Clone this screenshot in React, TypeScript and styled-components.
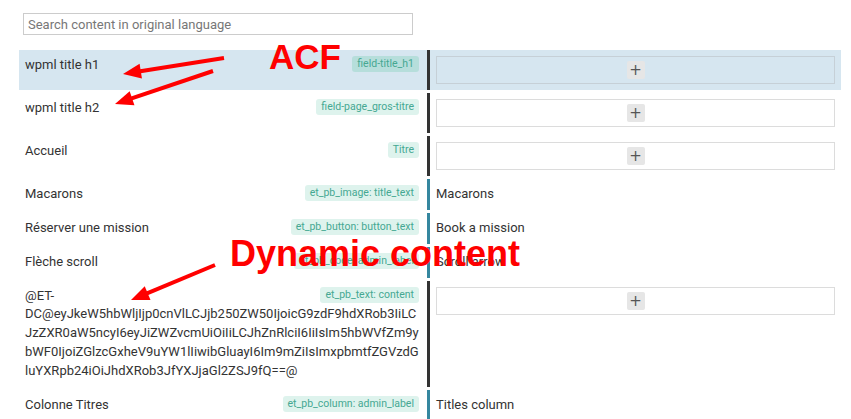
import React from 'react';
import styled, { createGlobalStyle } from 'styled-components';

type Cell = { kind: 'box' } | { kind: 'text'; value: string };

type Item = {
    original: string;
    tag: string;
    translation: Cell;
    active?: boolean;
};

const items: Item[] = [
    { original: 'wpml title h1', tag: 'field-title_h1', translation: { kind: 'box' }, active: true },
    { original: 'wpml title h2', tag: 'field-page_gros-titre', translation: { kind: 'box' } },
    { original: 'Accueil', tag: 'Titre', translation: { kind: 'box' } },
    { original: 'Macarons', tag: 'et_pb_image: title_text', translation: { kind: 'text', value: 'Macarons' } },
    { original: 'Réserver une mission', tag: 'et_pb_button: button_text', translation: { kind: 'text', value: 'Book a mission' } },
    { original: 'Flèche scroll', tag: 'et_pb_code: admin_label', translation: { kind: 'text', value: 'Scroll arrow' } },
    {
        original: '@ET-DC@eyJkeW5hbWljIjp0cnVlLCJjb250ZW50IjoicG9zdF9hdXRob3IiLCJzZXR0aW5ncyI6eyJiZWZvcmUiOiIiLCJhZnRlciI6IiIsIm5hbWVfZm9ybWF0IjoiZGlzcGxheV9uYW1lIiwibGluayI6Im9mZiIsImxpbmtfZGVzdGluYXRpb24iOiJhdXRob3JfYXJjaGl2ZSJ9fQ==@',
        tag: 'et_pb_text: content',
        translation: { kind: 'box' },
    },
    { original: 'Colonne Titres', tag: 'et_pb_column: admin_label', translation: { kind: 'text', value: 'Titles column' } },
];

const GlobalStyle = createGlobalStyle`
    body {
        margin: 0;
        background: #fff;
        font-family: Roboto, "Liberation Sans", sans-serif;
        color: #333;
    }
`

const App: React.FunctionComponent = () => {
    return (
        <Page>
            <GlobalStyle />
            <SearchWrap>
                <Search placeholder='Search content in original language' />
            </SearchWrap>
            <Table>
                {items.map((item, idx) => (
                    <Row key={idx} $active={item.active}>
                        <Original>
                            <Tag $active={item.active}>{item.tag}</Tag>
                            {item.original}
                        </Original>
                        <Translation $done={item.translation.kind === 'text'}>
                            {item.translation.kind === 'box' ? (
                                <EmptyBox $active={item.active}>
                                    <AddButton>+</AddButton>
                                </EmptyBox>
                            ) : (
                                item.translation.value
                            )}
                        </Translation>
                    </Row>
                ))}
            </Table>

            <Arrows width='851' height='419' viewBox='0 0 851 419'>
                <Arrow x1={224} y1={58} x2={123} y2={74} />
                <Arrow x1={213} y1={71} x2={115} y2={104} />
                <Arrow x1={215} y1={265} x2={131} y2={300} />
            </Arrows>
            <Note $size={35} style={{ left: 269, top: 39 }}>ACF</Note>
            <Note $size={36} style={{ left: 230, top: 236 }}>Dynamic content</Note>
        </Page>
    )
}

const Arrow = ({ x1, y1, x2, y2 }: { x1: number; y1: number; x2: number; y2: number }) => {
    const len = Math.hypot(x2 - x1, y2 - y1);
    const ux = (x2 - x1) / len;
    const uy = (y2 - y1) / len;
    const head = 18;
    const half = 7.5;
    const bx = x2 - ux * head;
    const by = y2 - uy * head;
    const pts = [
        [x2, y2],
        [bx - uy * half, by + ux * half],
        [bx + uy * half, by - ux * half],
    ].map((p) => p.join(',')).join(' ');
    return (
        <g>
            <line x1={x1} y1={y1} x2={bx + ux * 2} y2={by + uy * 2} stroke='#ff0000' strokeWidth={4} />
            <polygon points={pts} fill='#ff0000' />
        </g>
    )
}

const Page = styled.div`
    position: relative;
    padding: 13px 10px 0 19px;
    height: 419px;
    box-sizing: border-box;
    overflow: hidden;
`

const SearchWrap = styled.div`
    padding-left: 4px;
`

const Search = styled.input`
    display: block;
    width: 390px;
    height: 22px;
    box-sizing: border-box;
    border: 1px solid #ccc;
    border-radius: 0;
    padding: 0 4px;
    font-family: Roboto, "Liberation Sans", sans-serif;
    font-size: 13px;
    color: #333;
    outline: none;

    &::placeholder {
        color: #777;
    }
`

const Table = styled.div`
    display: flex;
    flex-direction: column;
    gap: 3px;
    margin-top: 15px;
    width: 822px;
`

const Row = styled.div<{ $active?: boolean }>`
    display: grid;
    grid-template-columns: 408px 1fr;
    background: ${(p) => (p.$active ? '#d6e6f0' : 'transparent')};
    font-size: 13px;
    line-height: 1.45;
`

const Original = styled.div`
    padding: 6px 8px 6px 6px;
    overflow-wrap: break-word;
    min-width: 0;
`

const Tag = styled.span<{ $active?: boolean }>`
    float: right;
    margin-left: 8px;
    height: 16px;
    padding: 0 5px;
    border-radius: 3px;
    background: ${(p) => (p.$active ? '#b6dedb' : '#def3ed')};
    color: #45a892;
    font-size: 10.5px;
    line-height: 16px;
    white-space: nowrap;
`

const Translation = styled.div<{ $done?: boolean }>`
    border-left: 3px solid ${(p) => (p.$done ? '#35879f' : '#333')};
    padding: 6px;
`

const EmptyBox = styled.div<{ $active?: boolean }>`
    height: 28px;
    box-sizing: border-box;
    border: 1px solid ${(p) => (p.$active ? '#c6d0d7' : '#dcdcdc')};
    display: flex;
    align-items: center;
    justify-content: center;
`

const AddButton = styled.span`
    width: 18px;
    height: 18px;
    border-radius: 2px;
    background: #e6e6e6;
    color: #555;
    font-size: 15px;
    line-height: 18px;
    text-align: center;
    font-family: "DejaVu Sans", sans-serif;
`

const Arrows = styled.svg`
    position: absolute;
    left: 0;
    top: 0;
    pointer-events: none;
`

const Note = styled.span<{ $size: number }>`
    position: absolute;
    font-family: "Liberation Sans", Arial, sans-serif;
    font-weight: bold;
    font-size: ${(p) => p.$size}px;
    line-height: 1;
    color: #ff0000;
    white-space: nowrap;
`

export default App;
